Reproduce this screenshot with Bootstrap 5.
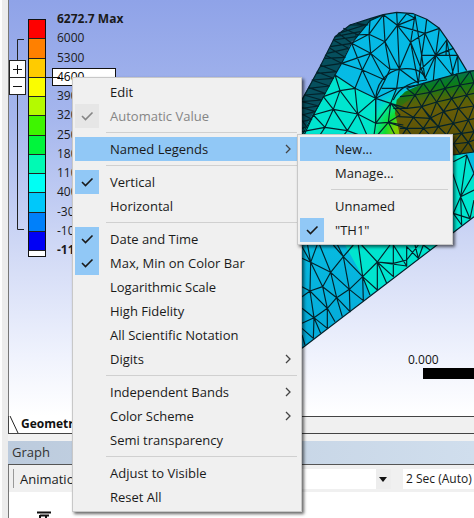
<!DOCTYPE html>
<html lang="en">
<head>
<meta charset="utf-8">
<meta name="viewport" content="width=device-width, initial-scale=1">
<title>Result legend menu</title>
<link href="https://cdn.jsdelivr.net/npm/bootstrap@5.3.0/dist/css/bootstrap.min.css" rel="stylesheet">
<style>
body{font-family:"Open Sans","Noto Sans",sans-serif;font-size:13px;line-height:18px;color:#1a1a1a;background:#f2f2f2}
.gutter{width:8px;background:linear-gradient(90deg,#fdfdfd 2px,#ececec 2px)}
.view3d{background:linear-gradient(#8fa3e8 0,#a5b6ed 28%,#d3dbf6 62%,#f0f3fd 86%,#fff 100%);border-left:1px solid #777}
.mesh{left:281px;top:0;width:184px;height:350px}
.scale-zoom{width:17px;padding-top:60px}
.scale-zoom svg{left:0;top:0}
.zoom-btn{width:17px;height:18px;border:1px solid #222;background:#fff;margin-bottom:-1px}
.bands{width:18px;height:238px;margin:19px 0 0 2px;border:1px solid #111;background:#fff;padding-bottom:5px}
.bands div{border-bottom:1px solid #222}
.values{height:249px;margin:10px 0 0 6px;width:72px;font-size:12px}
.values span{padding-left:5px}
.values b{padding-left:5px;white-space:nowrap}
.values input{width:64px;height:18px;border:1px solid #111;background:#fff;padding:0 0 0 4px;font-size:12px;line-height:16px}
.legend-link{left:36px;top:77px;width:15px;height:1px;background:#111}
.ruler{left:399px;top:351px;font-size:12px;color:#111}
.ruler div{width:70px;height:11px;background:#000;margin-left:15px}
.ruler span{display:block;line-height:17px}
.tabs{height:18px;background:#f0f0f0;border:1px solid #444;border-width:1px 0 1px 1px}
.tab-geo{width:170px;background:#fff;font-weight:700;font-size:12px;line-height:16px;margin-top:-1px;color:#111}
.pane-title{height:24px;margin-top:7px;background:linear-gradient(90deg,#bccbdd,#d0deed);border-bottom:1px solid #555;padding:2px 4px;color:#333}
.tools{height:27px;background:#f0f0f0;border-left:1px solid #777;padding:0 0 0 3px}
.grip{width:2px;height:19px;border-right:1px solid #999;margin-right:6px}
.tools select{appearance:none;border:0;border-radius:0;height:20px;color:#1a1a1a;font-size:12px;padding:0 0 0 3px;
background:#fff}
.combo-wrap svg{right:0;top:0}
.chart{height:26px;background:#fff;border-left:1px solid #777}
.ctx{background:#f0f0f0;border:1px solid #c8c8c8;box-shadow:2px 2px 3px rgba(0,0,0,.6)}
.ctx-main{left:72px;top:77px;width:230px;padding:2px}
.ctx-sub{left:222px;top:-3px;width:156px;padding:2px;z-index:2}
.ctx button{border:0;background:none;color:#1a1a1a;height:24px;width:100%;padding:0;text-align:left}
.ctx .hot{background:#91c8f6}
.ctx .tick{width:24px;height:24px;margin-right:11px}
.ctx .on{background:#91c8f6}
.ctx .off{background:#e6e6e6}
.ctx button:disabled{color:#858585}
.ctx hr{margin:4px 2px 4px 31px;border-top:1px solid #d0d0d0;opacity:1}
.ctx .arrow{margin-right:7px}
</style>
<script src="https://cdn.jsdelivr.net/npm/bootstrap@5.3.0/dist/js/bootstrap.bundle.min.js"></script>
</head>
<body class="vh-100 overflow-hidden position-relative">
<svg class="d-none">
  <symbol id="check" viewBox="0 0 24 24"><path d="M7 12l3.500 3.500L17.500 8.500" fill="none" stroke="currentColor" stroke-width="1.600"/></symbol>
  <symbol id="chev" viewBox="0 0 8 10"><path d="M2 1l4 4-4 4" fill="none" stroke="#444" stroke-width="1.300"/></symbol>
</svg>
<div class="d-flex h-100">
  <div class="gutter flex-shrink-0"></div>
  <main class="d-flex flex-column flex-grow-1 overflow-hidden">
    <section class="view3d flex-grow-1 position-relative overflow-hidden">
      <svg class="mesh position-absolute" viewBox="0 0 552 1050" aria-label="Meshed part">
        <defs>
          <linearGradient id="face" x1="0" y1="0" x2="0" y2="1"><stop offset="0" stop-color="#05b9e6"/><stop offset=".6" stop-color="#08bfe3"/><stop offset="1" stop-color="#04a9d8"/></linearGradient>
          <linearGradient id="cyl" x1="0" y1="0" x2=".150" y2="1"><stop offset="0" stop-color="#075a78"/><stop offset=".120" stop-color="#06705c"/><stop offset=".260" stop-color="#0a7d1c"/><stop offset=".450" stop-color="#426c08"/><stop offset=".600" stop-color="#665c08"/><stop offset="1" stop-color="#4c4405"/></linearGradient>
          <linearGradient id="core" x1="0" y1="0" x2="0" y2="1"><stop offset="0" stop-color="#665c08" stop-opacity="0"/><stop offset=".350" stop-color="#665c08"/><stop offset="1" stop-color="#544b05"/></linearGradient>
          <radialGradient id="heat" gradientUnits="userSpaceOnUse" cx="350" cy="400" r="135"><stop offset="0" stop-color="#a3a800"/><stop offset=".280" stop-color="#7cd000"/><stop offset=".480" stop-color="#10dc30"/><stop offset=".750" stop-color="#00e8b0"/><stop offset="1" stop-color="#00e5d0" stop-opacity="0"/></radialGradient>
        </defs>
        <path fill="#064f5d" d="M30 305L90 200 120 140 135 110 180 75 240 56 280 44 240 80 185 125 155 190 135 225 100 290 36 410 30 440z"/>
        <path fill="url(#face)" d="M280 44L320 37 370 41 410 58 448 85 490 145 530 212 552 212V650L36 1045V410L100 290 155 190 185 130 240 62z"/>
        <path fill="#00e5cf" d="M135 225L195 265 257 295 255 420H36V400z M165 735L262 700 430 690 438 738 240 885 218 830z M490 465L530 465 552 540V650L490 695z"/>
        <circle cx="350" cy="400" r="135" fill="url(#heat)"/>
        <path fill="url(#cyl)" d="M315 340L320 300 345 275 400 250 530 212 552 210V456L490 465 340 450z"/>
        <path fill="url(#core)" d="M325 325L400 265 470 270 552 270V456L490 465 330 440z"/>
        <g fill="none" stroke="#03222a" stroke-width="3.500" stroke-linejoin="round">
          <path d="M36 300L90 200 120 140 135 110 180 75 240 56 280 44 320 37 370 41 410 58 448 85 490 145 530 212M280 44L240 62 185 130 155 190 135 225 100 290 36 405M36 1045L552 650"/>
          <path d="M135 110L210 95M120 140L185 130 145 100 225 75 180 75M112 160L175 145 130 120 200 110M105 175L165 172 120 145M90 200L155 190 105 165M80 220L140 215 90 195M68 240L130 235 80 215M55 265L118 258 65 240M45 285L105 280 55 262M36 305L95 300 42 285M36 325L85 318 36 305M36 345L75 335 36 322M36 365L65 358 36 342M36 385L50 380 36 362M160 85L205 105M200 70L235 75"/>
          <path d="M240 62L237 103 280 44 285 125 322 76 280 44M322 76L320 37M322 76L350 41 375 55 322 76 405 100M375 45L362 127 322 76 328 207 285 125 237 103 195 105M185 130L237 103 242 160 185 130 217 210 242 160 285 125 300 208 242 160 155 190 217 210 195 265 135 225 150 272 195 265 203 342 150 272 100 290 130 328 150 272M410 58L405 100 448 85 437 166 405 100 362 127 405 235M405 100L395 166 375 45M328 207L362 127 385 250 395 166M503 166L395 166 405 235 437 166M437 166L470 120 468 166M437 166L490 145M437 166L430 240M437 166L485 225 503 166 505 218M437 166L390 210M470 120L490 225M217 210L285 240 242 160M285 240L300 208 328 207 320 265 257 295 217 210M203 342L257 295 302 310 320 265 275 265M285 240L257 295M203 342L130 328 100 290 70 345 130 328 105 382 70 345 40 410M130 328L172 392 203 342 257 370 257 295 195 265M105 382L80 420M105 382L172 392 150 420M105 382L36 395M172 392L235 415 203 342M257 370L302 310 295 367 257 370 250 420 295 367 320 415M302 310L330 345 295 367 340 375M320 265L385 255M328 207L385 250"/>
          <path d="M257 370V295C262 230 310 205 350 206S400 220 410 240M310 300C325 262 370 243 410 240"/>
          <path d="M350 265L400 250 450 236 500 222 552 212M330 290L375 285 420 277 465 265 510 255 552 248M310 325L350 325 395 320 440 306 485 296 530 285 552 280M325 350L370 352 420 355 460 335 505 325 552 318M330 385L350 385 400 385 445 380 490 370 535 360 552 356M375 420L425 410 470 405 515 400 552 395M490 432L535 427 552 420M490 465L552 456"/>
          <path d="M350 265L375 285 400 250 420 277 450 236 465 265 500 222 510 255 540 214 552 248M302 310L350 325 375 285 395 320 420 277 440 306 465 265 485 296 510 255 530 285 552 248M302 310L370 352 395 320 420 355 440 306 460 335 485 296 505 325 530 285 552 318M295 367L350 385 370 352 400 385 420 355 445 380 460 335 490 370 505 325 535 360 552 318M330 415L350 385 375 420 400 385 425 410 445 380 470 405 490 370 515 400 535 360 552 395M490 432L515 400 535 427 552 395M490 432L510 462 535 427 552 456M490 370L545 440M440 306L490 370M395 320L445 380"/>
          <path d="M490 485L530 465 512 590 488 520M530 465L552 520 512 590 552 570M512 590L540 656 552 600M512 590L490 640 540 656M512 590L515 675 490 640"/>
          <path d="M50 720L62 787 36 775M62 787L85 725 122 817 62 787 60 873 36 860M62 787L98 860 122 817 160 770 140 730M36 740L62 787M160 770L130 735M160 770L178 868 122 817 140 893 98 860 60 873 36 890M98 860L112 925 60 873 72 953 36 925M72 953L112 925 140 893 178 868 218 830 160 770 190 735M205 735L218 830 262 786 215 735M262 786L300 735M262 786V870L218 830 240 885M262 786L290 850M262 786L310 830V790L262 786 350 798 310 735V790L350 780 385 735M350 800V740L385 775 375 735M385 775L400 735 420 750M178 868L180 935 140 893 157 950M178 868L220 902 218 830M112 925V985L72 953 92 1000M112 925L135 965M72 953L70 1015 36 985M72 953L36 970M45 1035L36 1005"/>
        </g>
      </svg>
      <div class="d-flex">
        <div class="scale-zoom position-relative d-flex flex-column">
          <svg class="position-absolute" width="17" height="240"><path d="M15 39.500H8.500V229.500H15" fill="none" stroke="#222"/></svg>
          <button class="zoom-btn position-relative p-0 d-flex" aria-label="Expand"><svg class="m-auto" width="9" height="9"><path d="M0 4.500H9M4.500 0V9" stroke="#111"/></svg></button>
          <button class="zoom-btn position-relative p-0 d-flex" aria-label="Collapse"><svg class="m-auto" width="9" height="9"><path d="M0 4.500H9" stroke="#111"/></svg></button>
        </div>
        <div class="bands d-flex flex-column">
          <div class="flex-fill" style="background:#fe0000"></div><div class="flex-fill" style="background:#ff8000"></div>
          <div class="flex-fill" style="background:#ffcb00"></div><div class="flex-fill" style="background:#fafd00"></div>
          <div class="flex-fill" style="background:#b4fa00"></div><div class="flex-fill" style="background:#3ef500"></div>
          <div class="flex-fill" style="background:#00f53c"></div><div class="flex-fill" style="background:#00fab4"></div>
          <div class="flex-fill" style="background:#00fff4"></div><div class="flex-fill" style="background:#00c8fa"></div>
          <div class="flex-fill" style="background:#0080fa"></div><div class="flex-fill" style="background:#0000f5"></div>
        </div>
        <div class="values d-flex flex-column justify-content-between">
          <b>6272.7 Max</b><span>6000</span><span>5300</span><input value="4600" aria-label="Band value"><span>3900</span><span>3200</span><span>2500</span><span>1800</span><span>1100</span><span>400</span><span>-300</span><span>-1000</span><b>-1110</b>
        </div>
      </div>
      <div class="legend-link position-absolute"></div>
      <div class="ruler position-absolute"><span>0.000</span><div></div></div>
    </section>
    <div class="tabs flex-shrink-0"><div class="tab-geo d-flex"><svg width="12" height="17"><path d="M1 0L9 17" stroke="#222"/></svg>Geometry</div></div>
    <div class="pane-title flex-shrink-0">Graph</div>
    <div class="tools d-flex align-items-center flex-shrink-0">
      <div class="grip"></div>
      <label for="frames">Animation</label>
      <div class="combo-wrap position-relative ms-auto me-2 pe-1">
        <select id="frames" style="width:152px"><option>20 Frames</option></select>
        <svg class="position-absolute me-1" width="15" height="20"><path fill="#ededed" d="M0 0h15v20H0z"/><path d="M3 8h8l-4 5z" fill="#111"/></svg>
      </div>
      <select aria-label="Duration" style="width:71px"><option>2 Sec (Auto)</option></select>
    </div>
    <div class="chart flex-shrink-0"><svg class="ms-4" width="24" height="26"><path d="M4 20.500h14M7 23.500h9M7 23v3M13 23v3" stroke="#111" stroke-width="2"/></svg></div>
  </main>
</div>

<div class="ctx ctx-main position-absolute" role="menu">
  <button class="d-flex align-items-center"><span class="tick"></span>Edit</button>
  <button class="d-flex align-items-center" disabled><svg class="tick off"><use href="#check"/></svg>Automatic Value</button>
  <hr>
  <div class="position-relative">
    <button class="hot d-flex align-items-center"><span class="tick"></span>Named Legends<svg class="arrow ms-auto" width="8" height="10"><use href="#chev"/></svg></button>
    <div class="ctx ctx-sub position-absolute" role="menu">
      <button class="hot d-flex align-items-center"><span class="tick"></span>New...</button>
      <button class="d-flex align-items-center"><span class="tick"></span>Manage...</button>
      <hr>
      <button class="d-flex align-items-center"><span class="tick"></span>Unnamed</button>
      <button class="d-flex align-items-center"><svg class="tick on"><use href="#check"/></svg>"TH1"</button>
    </div>
  </div>
  <hr>
  <button class="d-flex align-items-center"><svg class="tick on"><use href="#check"/></svg>Vertical</button>
  <button class="d-flex align-items-center"><span class="tick"></span>Horizontal</button>
  <hr>
  <button class="d-flex align-items-center"><svg class="tick on"><use href="#check"/></svg>Date and Time</button>
  <button class="d-flex align-items-center"><svg class="tick on"><use href="#check"/></svg>Max, Min on Color Bar</button>
  <button class="d-flex align-items-center"><span class="tick"></span>Logarithmic Scale</button>
  <button class="d-flex align-items-center"><span class="tick"></span>High Fidelity</button>
  <button class="d-flex align-items-center"><span class="tick"></span>All Scientific Notation</button>
  <button class="d-flex align-items-center"><span class="tick"></span>Digits<svg class="arrow ms-auto" width="8" height="10"><use href="#chev"/></svg></button>
  <hr>
  <button class="d-flex align-items-center"><span class="tick"></span>Independent Bands<svg class="arrow ms-auto" width="8" height="10"><use href="#chev"/></svg></button>
  <button class="d-flex align-items-center"><span class="tick"></span>Color Scheme<svg class="arrow ms-auto" width="8" height="10"><use href="#chev"/></svg></button>
  <button class="d-flex align-items-center"><span class="tick"></span>Semi transparency</button>
  <hr>
  <button class="d-flex align-items-center"><span class="tick"></span>Adjust to Visible</button>
  <button class="d-flex align-items-center"><span class="tick"></span>Reset All</button>
</div>
</body>
</html>
